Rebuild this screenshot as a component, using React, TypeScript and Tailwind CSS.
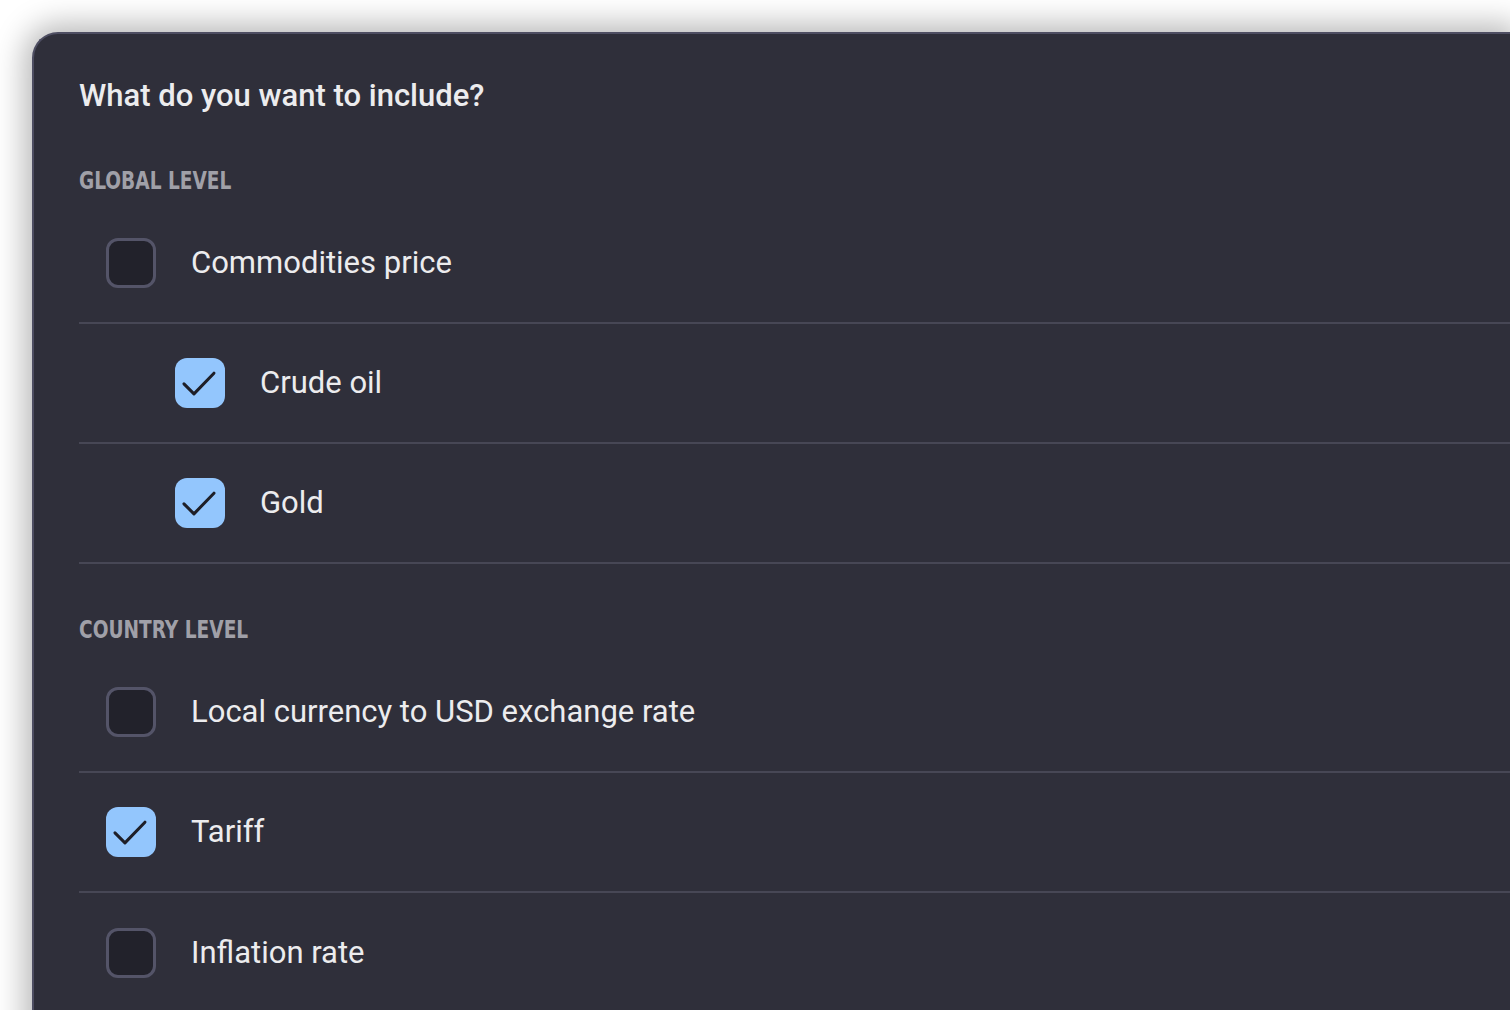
import { Fragment } from "react";

interface Option {
	label: string;
	checked: boolean;
	nested?: boolean;
}

interface Section {
	title: string;
	options: Option[];
}

const sections: Section[] = [
	{
		title: "Global level",
		options: [
			{ label: "Commodities price", checked: false },
			{ label: "Crude oil", checked: true, nested: true },
			{ label: "Gold", checked: true, nested: true },
		],
	},
	{
		title: "Country level",
		options: [
			{ label: "Local currency to USD exchange rate", checked: false },
			{ label: "Tariff", checked: true },
			{ label: "Inflation rate", checked: false },
		],
	},
];

function Checkbox({ checked }: { checked: boolean }) {
	if (checked) {
		return (
			<span className="flex h-[50px] w-[50px] shrink-0 items-center justify-center rounded-[12px] bg-[#93c6fd]">
				<svg viewBox="0 0 24 24" className="h-[50px] w-[50px]" fill="none">
					<polyline
						points="4.3 12.4 9.1 17.2 18.7 7.3"
						stroke="#1e1f28"
						strokeWidth="1.45"
						strokeLinecap="round"
						strokeLinejoin="round"
					/>
				</svg>
			</span>
		);
	}
	return (
		<span className="block h-[50px] w-[50px] shrink-0 rounded-[12px] border-[3px] border-[#545468] bg-[#22222b]" />
	);
}

export default function App() {
	return (
		<div className="h-[1010px] overflow-hidden bg-white pl-8 pt-8 font-['Roboto',sans-serif]">
			<div className="h-[1100px] rounded-tl-[26px] border-l-2 border-t-2 border-[#4e4e62] bg-[#2f2f3a] pl-[45px] pt-[44px] shadow-[0_0_30px_8px_rgba(0,0,0,0.28)]">
				<h1 className="text-[31px] font-medium leading-[36px] text-[#ececee]">
					What do you want to include?
				</h1>

				{sections.map((section, i) => (
					<Fragment key={section.title}>
						<h2
							className={`${i === 0 ? "mt-[55px]" : "mt-[54px]"} origin-left scale-x-[0.86] font-['DejaVu_Sans_Condensed',sans-serif] text-[24px] font-bold uppercase leading-[24px] text-[#a0a0a8]`}>
							{section.title}
						</h2>
						<ul className="mt-[11px]">
							{section.options.map((opt, j) => (
								<li
									key={opt.label}
									className={`flex h-[120px] items-center gap-[35px] ${
										opt.nested ? "pl-[96px]" : "pl-[27px]"
									} ${
										j < section.options.length - 1 || i === 0
											? "border-b-2 border-[#474755]"
											: ""
									}`}>
									<Checkbox checked={opt.checked} />
									<span className="text-[31px] leading-[36px] text-[#ececee]">
										{opt.label}
									</span>
								</li>
							))}
						</ul>
					</Fragment>
				))}
			</div>
		</div>
	);
}
